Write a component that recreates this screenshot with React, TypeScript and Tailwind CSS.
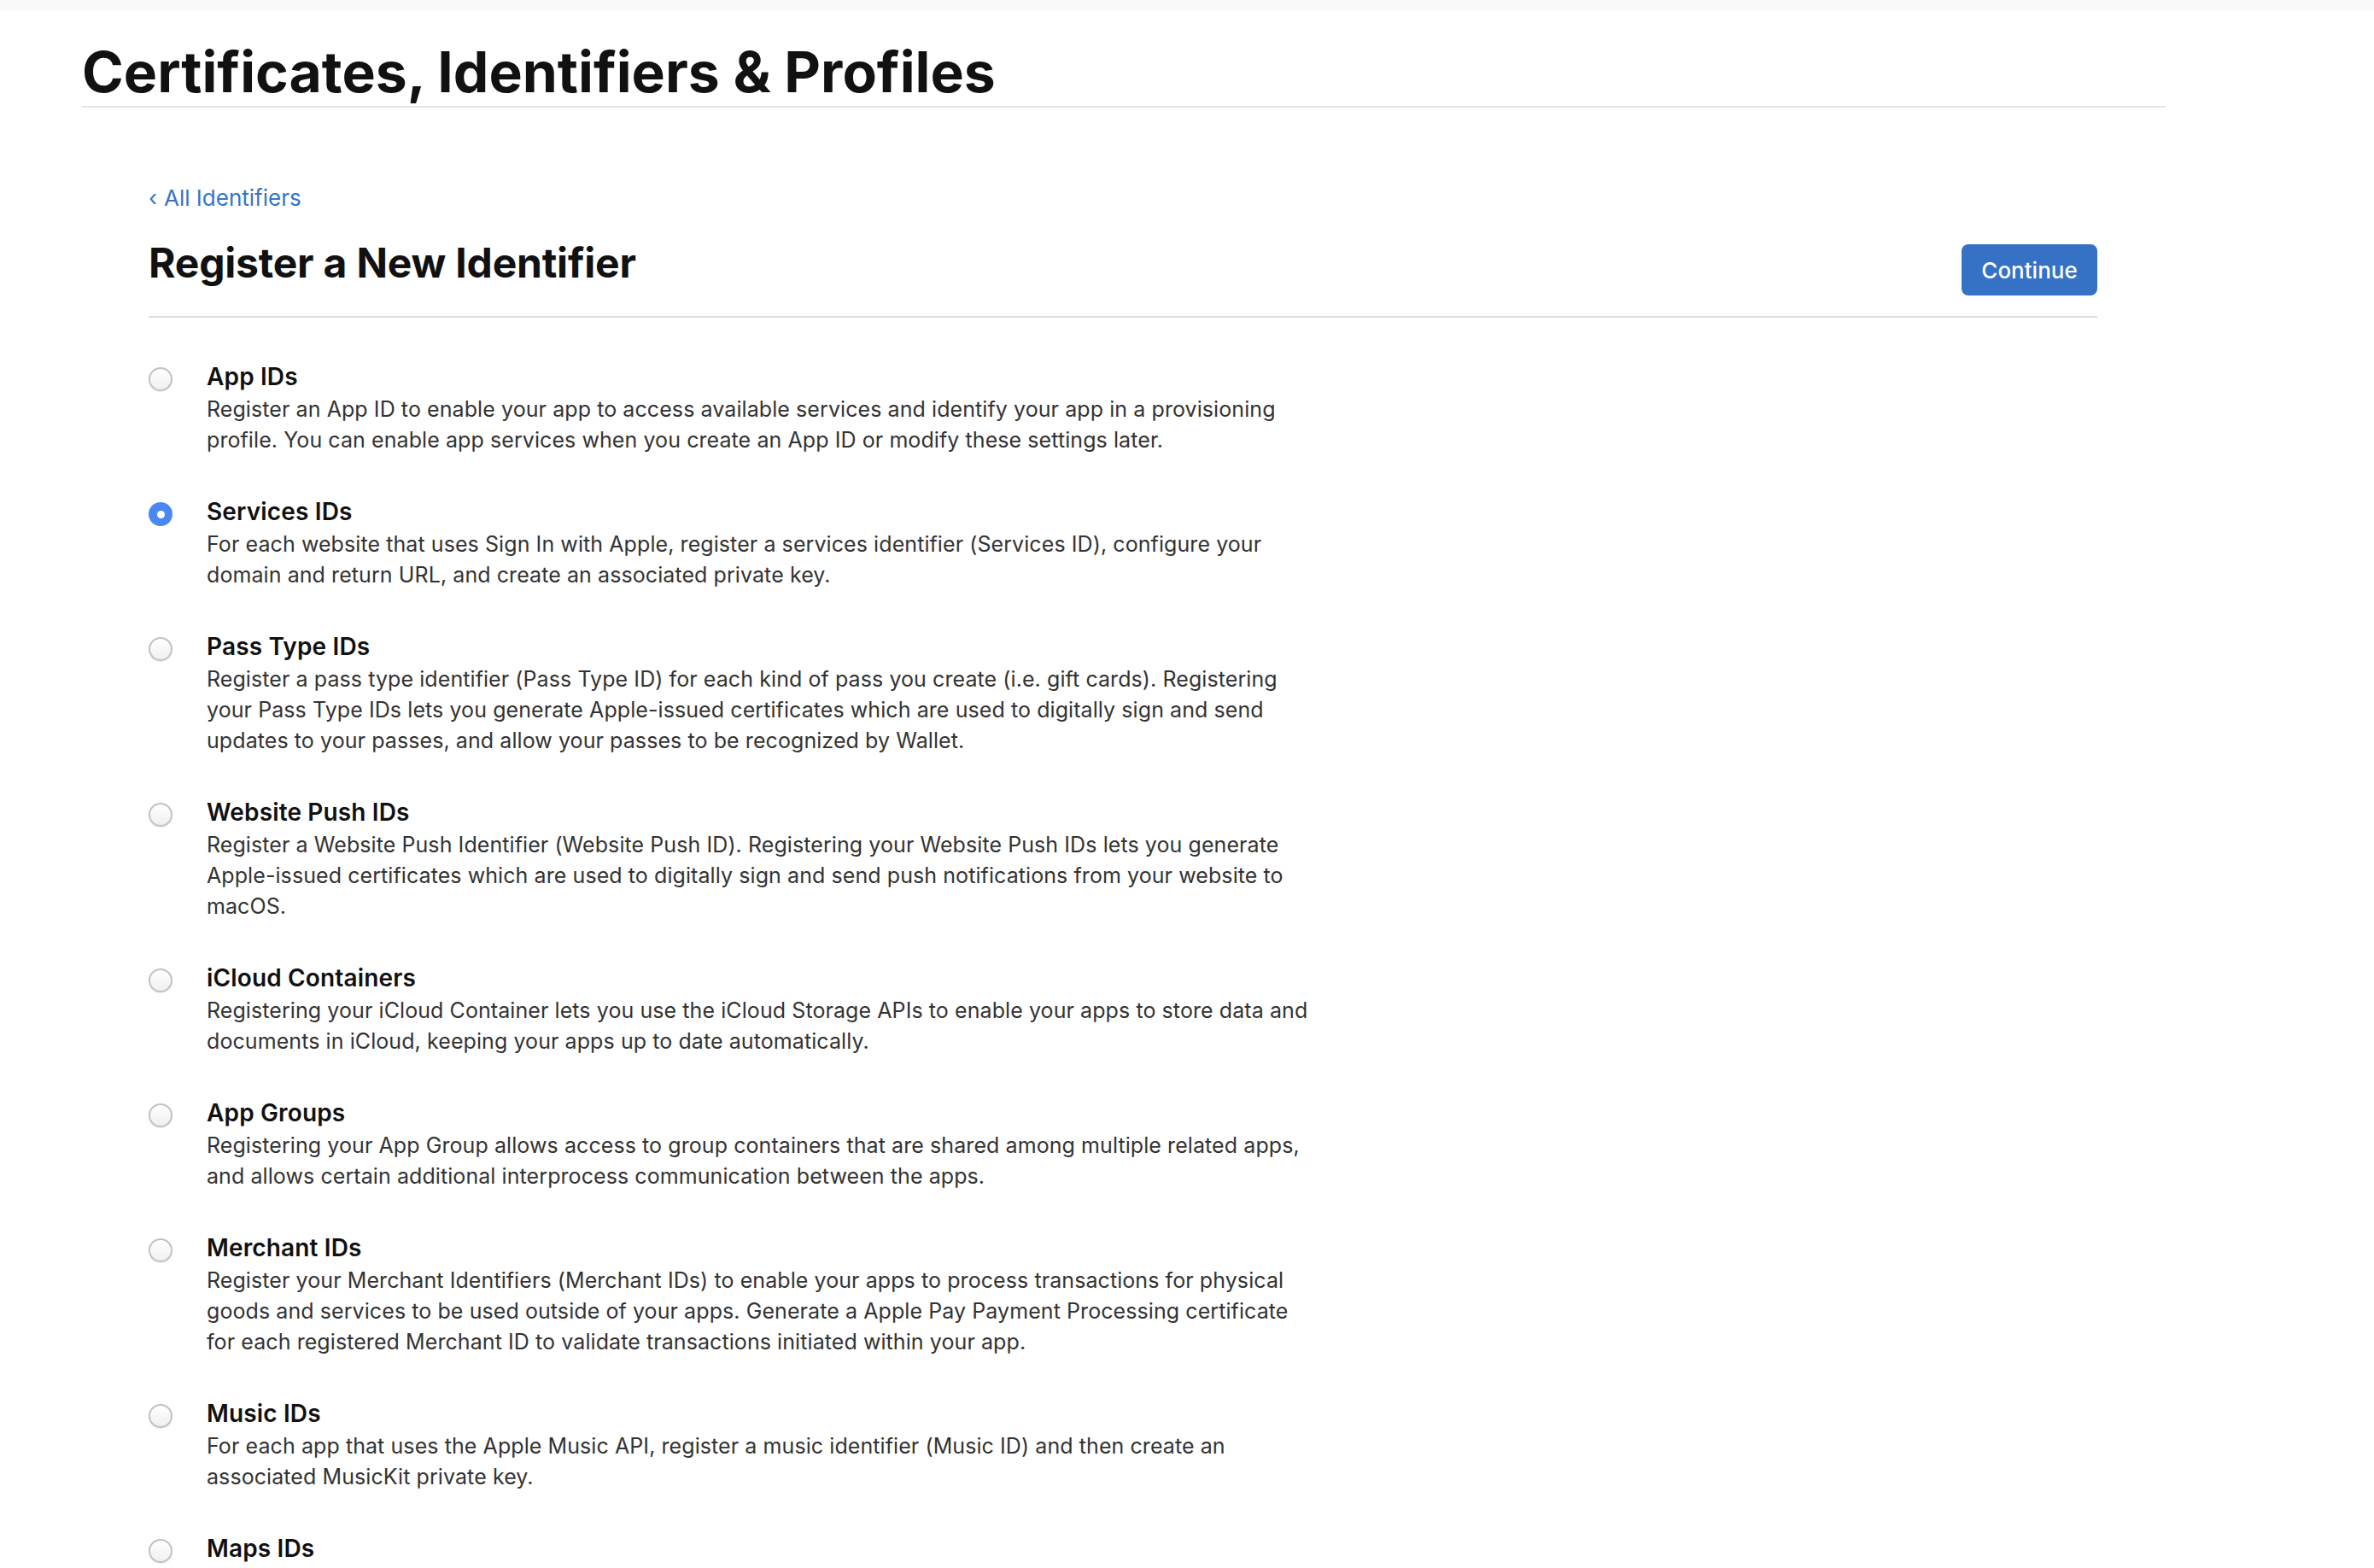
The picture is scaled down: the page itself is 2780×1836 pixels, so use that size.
// Register a New Identifier — identifier type picker

import { useState } from 'react';

type IdentifierType = {
  id: string;
  title: string;
  lines: string[];
};

const identifierTypes: IdentifierType[] = [
  {
    id: 'app',
    title: 'App IDs',
    lines: [
      'Register an App ID to enable your app to access available services and identify your app in a provisioning',
      'profile. You can enable app services when you create an App ID or modify these settings later.',
    ],
  },
  {
    id: 'services',
    title: 'Services IDs',
    lines: [
      'For each website that uses Sign In with Apple, register a services identifier (Services ID), configure your',
      'domain and return URL, and create an associated private key.',
    ],
  },
  {
    id: 'pass',
    title: 'Pass Type IDs',
    lines: [
      'Register a pass type identifier (Pass Type ID) for each kind of pass you create (i.e. gift cards). Registering',
      'your Pass Type IDs lets you generate Apple-issued certificates which are used to digitally sign and send',
      'updates to your passes, and allow your passes to be recognized by Wallet.',
    ],
  },
  {
    id: 'push',
    title: 'Website Push IDs',
    lines: [
      'Register a Website Push Identifier (Website Push ID). Registering your Website Push IDs lets you generate',
      'Apple-issued certificates which are used to digitally sign and send push notifications from your website to',
      'macOS.',
    ],
  },
  {
    id: 'icloud',
    title: 'iCloud Containers',
    lines: [
      'Registering your iCloud Container lets you use the iCloud Storage APIs to enable your apps to store data and',
      'documents in iCloud, keeping your apps up to date automatically.',
    ],
  },
  {
    id: 'groups',
    title: 'App Groups',
    lines: [
      'Registering your App Group allows access to group containers that are shared among multiple related apps,',
      'and allows certain additional interprocess communication between the apps.',
    ],
  },
  {
    id: 'merchant',
    title: 'Merchant IDs',
    lines: [
      'Register your Merchant Identifiers (Merchant IDs) to enable your apps to process transactions for physical',
      'goods and services to be used outside of your apps. Generate a Apple Pay Payment Processing certificate',
      'for each registered Merchant ID to validate transactions initiated within your app.',
    ],
  },
  {
    id: 'music',
    title: 'Music IDs',
    lines: [
      'For each app that uses the Apple Music API, register a music identifier (Music ID) and then create an',
      'associated MusicKit private key.',
    ],
  },
  {
    id: 'maps',
    title: 'Maps IDs',
    lines: [],
  },
];

export default function App() {
  const [selected, setSelected] = useState('services');

  return (
    <div className="min-h-screen bg-white font-['Inter',sans-serif] text-[#111111]">
      {/* Top strip */}
      <div className="h-[12px] bg-[#f9f9f9]" />

      <div className="ml-[96px] w-[2440px]">
        {/* Page title */}
        <div className="pt-[34px] pb-[2px] border-b-2 border-[#e5e5e5]">
          <h1 className="text-[66px] leading-[76px] font-bold">
            Certificates, Identifiers &amp; Profiles
          </h1>
        </div>

        <div className="pl-[78px] pr-[80px]">
          {/* Back link */}
          <a
            href="#"
            className="mt-[90px] flex items-center gap-[8px] text-[26px] leading-[32px] text-[#3574c9]"
          >
            <span className="text-[26px]">‹</span>
            All Identifiers
          </a>

          {/* Section header */}
          <div className="mt-[32px] h-[92px] flex items-start justify-between border-b-2 border-[#dedede]">
            <h2 className="text-[48px] leading-[56px] font-bold tracking-[-0.2px]">
              Register a New Identifier
            </h2>
            <button className="mt-[6px] h-[60px] w-[159px] rounded-[8px] bg-[#3572c6] text-white text-[26px] font-medium">
              Continue
            </button>
          </div>

          {/* Identifier types */}
          <div className="pt-[50px] flex flex-col gap-[47px]">
            {identifierTypes.map((t) => (
              <label
                key={t.id}
                className="flex items-start gap-[40px] cursor-pointer"
                onClick={() => setSelected(t.id)}
              >
                <Radio checked={selected === t.id} />
                <div>
                  <div className="text-[28px] leading-[39px] font-semibold tracking-[0.15px]">
                    {t.title}
                  </div>
                  <div className="text-[25px] leading-[36px] tracking-[0.08px] text-[#333333]">
                    {t.lines.map((line, i) => (
                      <div key={i}>{line}</div>
                    ))}
                  </div>
                </div>
              </label>
            ))}
          </div>
        </div>
      </div>
    </div>
  );
}

function Radio({ checked }: { checked: boolean }) {
  if (checked) {
    return (
      <span className="mt-[8px] w-[28px] h-[28px] shrink-0 rounded-full bg-[#4a87f2] flex items-center justify-center">
        <span className="w-[9px] h-[9px] rounded-full bg-white" />
      </span>
    );
  }
  return (
    <span className="mt-[8px] w-[28px] h-[28px] shrink-0 rounded-full border-2 border-[#c2c2c2] bg-gradient-to-b from-white to-[#f0f0f0] shadow-[0_1px_1px_rgba(0,0,0,0.08)]" />
  );
}
